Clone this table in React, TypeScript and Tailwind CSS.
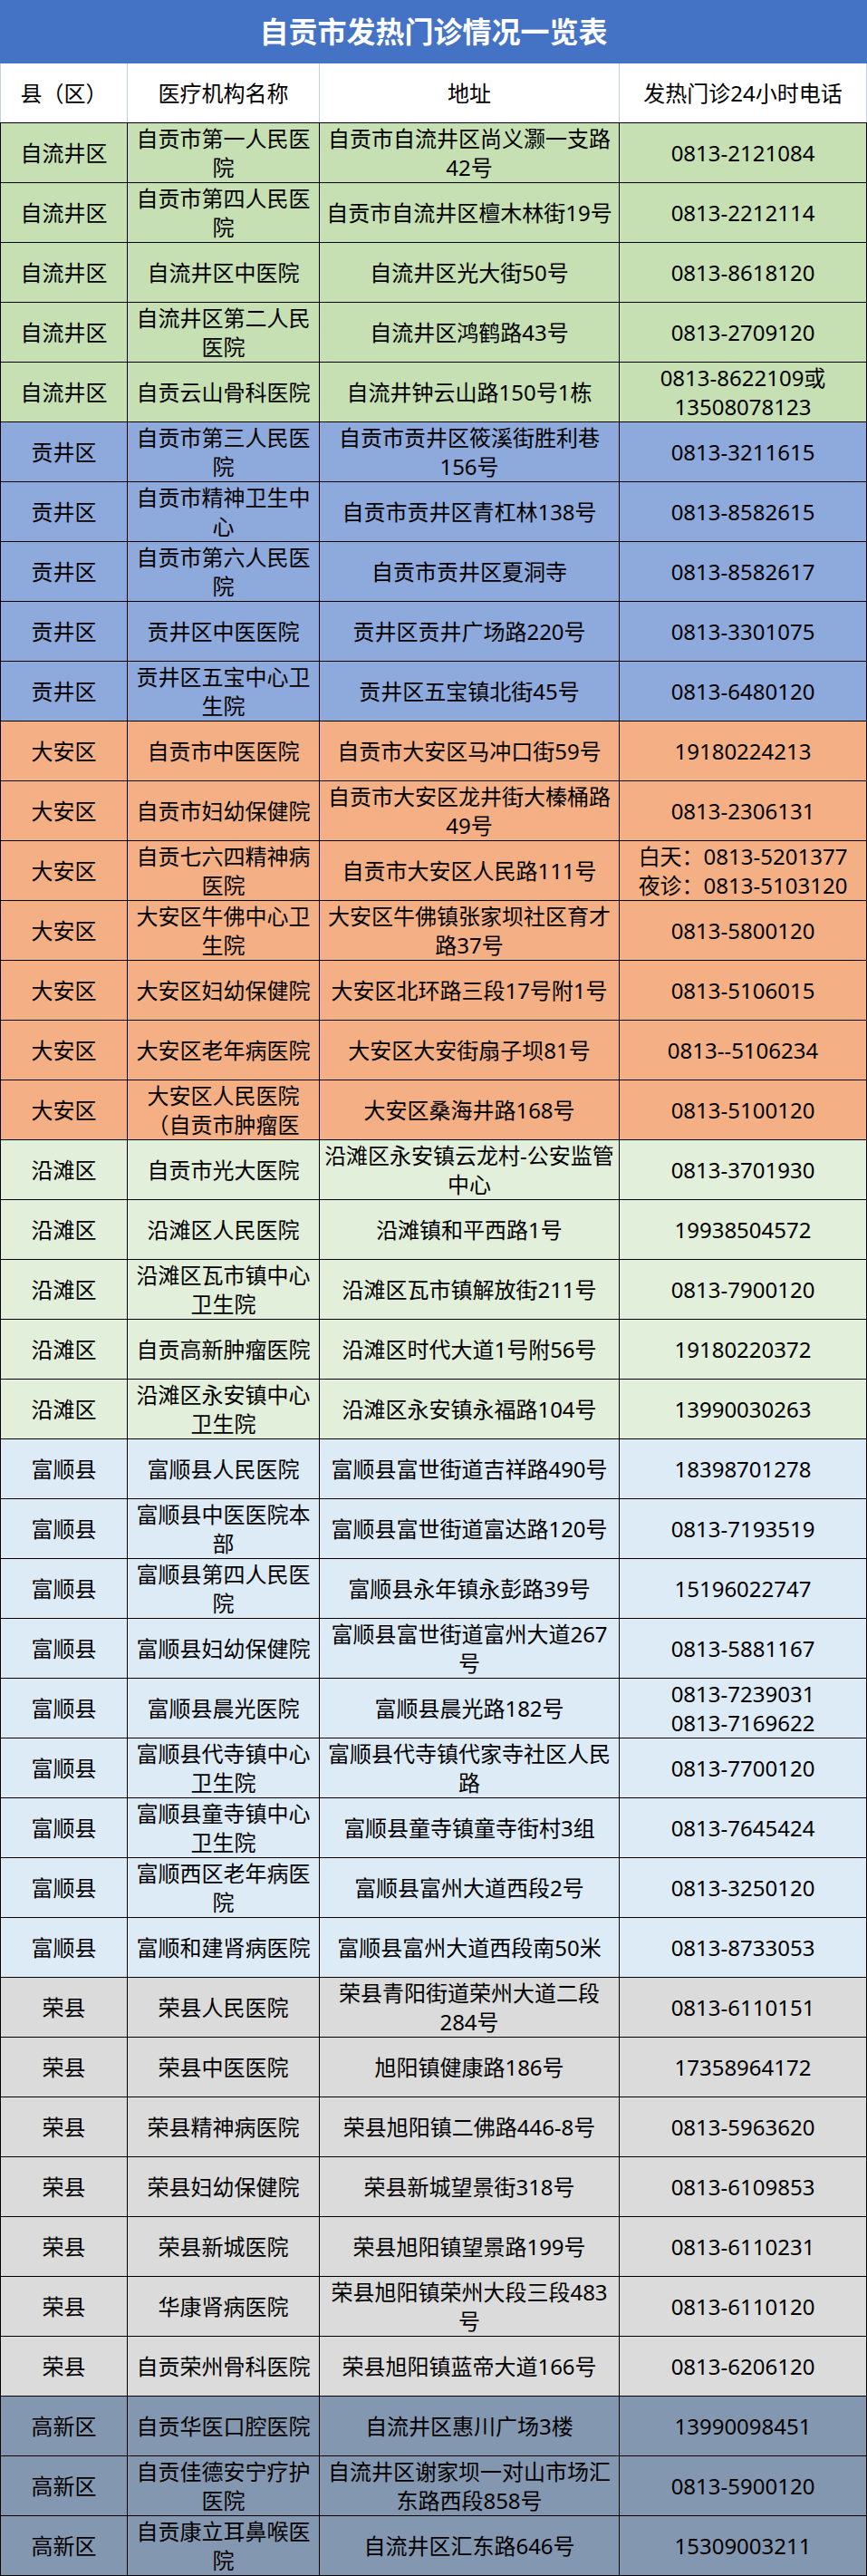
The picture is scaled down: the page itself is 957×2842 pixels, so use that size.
import React from "react";

type Group = "zlj" | "gj" | "da" | "yt" | "fs" | "rx" | "gx";

type Row = {
  g: Group;
  c: string;
  n: string[];
  a: string[];
  p: string[];
};

const bg: Record<Group, string> = {
  zlj: "bg-[#C6E0B4]",
  gj: "bg-[#8EA9DB]",
  da: "bg-[#F4B084]",
  yt: "bg-[#E2EFDA]",
  fs: "bg-[#DDEBF7]",
  rx: "bg-[#DBDBDB]",
  gx: "bg-[#8497B0]",
};

const rows: Row[] = [
  { g: "zlj", c: "自流井区", n: ["自贡市第一人民医", "院"], a: ["自贡市自流井区尚义灏一支路", "42号"], p: ["0813-2121084"] },
  { g: "zlj", c: "自流井区", n: ["自贡市第四人民医", "院"], a: ["自贡市自流井区檀木林街19号"], p: ["0813-2212114"] },
  { g: "zlj", c: "自流井区", n: ["自流井区中医院"], a: ["自流井区光大街50号"], p: ["0813-8618120"] },
  { g: "zlj", c: "自流井区", n: ["自流井区第二人民", "医院"], a: ["自流井区鸿鹤路43号"], p: ["0813-2709120"] },
  { g: "zlj", c: "自流井区", n: ["自贡云山骨科医院"], a: ["自流井钟云山路150号1栋"], p: ["0813-8622109或", "13508078123"] },

  { g: "gj", c: "贡井区", n: ["自贡市第三人民医", "院"], a: ["自贡市贡井区筱溪街胜利巷", "156号"], p: ["0813-3211615"] },
  { g: "gj", c: "贡井区", n: ["自贡市精神卫生中", "心"], a: ["自贡市贡井区青杠林138号"], p: ["0813-8582615"] },
  { g: "gj", c: "贡井区", n: ["自贡市第六人民医", "院"], a: ["自贡市贡井区夏洞寺"], p: ["0813-8582617"] },
  { g: "gj", c: "贡井区", n: ["贡井区中医医院"], a: ["贡井区贡井广场路220号"], p: ["0813-3301075"] },
  { g: "gj", c: "贡井区", n: ["贡井区五宝中心卫", "生院"], a: ["贡井区五宝镇北街45号"], p: ["0813-6480120"] },

  { g: "da", c: "大安区", n: ["自贡市中医医院"], a: ["自贡市大安区马冲口街59号"], p: ["19180224213"] },
  { g: "da", c: "大安区", n: ["自贡市妇幼保健院"], a: ["自贡市大安区龙井街大榛桶路", "49号"], p: ["0813-2306131"] },
  { g: "da", c: "大安区", n: ["自贡七六四精神病", "医院"], a: ["自贡市大安区人民路111号"], p: ["白天：0813-5201377", "夜诊：0813-5103120"] },
  { g: "da", c: "大安区", n: ["大安区牛佛中心卫", "生院"], a: ["大安区牛佛镇张家坝社区育才", "路37号"], p: ["0813-5800120"] },
  { g: "da", c: "大安区", n: ["大安区妇幼保健院"], a: ["大安区北环路三段17号附1号"], p: ["0813-5106015"] },
  { g: "da", c: "大安区", n: ["大安区老年病医院"], a: ["大安区大安街扇子坝81号"], p: ["0813--5106234"] },
  { g: "da", c: "大安区", n: ["大安区人民医院", "（自贡市肿瘤医"], a: ["大安区桑海井路168号"], p: ["0813-5100120"] },

  { g: "yt", c: "沿滩区", n: ["自贡市光大医院"], a: ["沿滩区永安镇云龙村-公安监管", "中心"], p: ["0813-3701930"] },
  { g: "yt", c: "沿滩区", n: ["沿滩区人民医院"], a: ["沿滩镇和平西路1号"], p: ["19938504572"] },
  { g: "yt", c: "沿滩区", n: ["沿滩区瓦市镇中心", "卫生院"], a: ["沿滩区瓦市镇解放街211号"], p: ["0813-7900120"] },
  { g: "yt", c: "沿滩区", n: ["自贡高新肿瘤医院"], a: ["沿滩区时代大道1号附56号"], p: ["19180220372"] },
  { g: "yt", c: "沿滩区", n: ["沿滩区永安镇中心", "卫生院"], a: ["沿滩区永安镇永福路104号"], p: ["13990030263"] },

  { g: "fs", c: "富顺县", n: ["富顺县人民医院"], a: ["富顺县富世街道吉祥路490号"], p: ["18398701278"] },
  { g: "fs", c: "富顺县", n: ["富顺县中医医院本", "部"], a: ["富顺县富世街道富达路120号"], p: ["0813-7193519"] },
  { g: "fs", c: "富顺县", n: ["富顺县第四人民医", "院"], a: ["富顺县永年镇永彭路39号"], p: ["15196022747"] },
  { g: "fs", c: "富顺县", n: ["富顺县妇幼保健院"], a: ["富顺县富世街道富州大道267", "号"], p: ["0813-5881167"] },
  { g: "fs", c: "富顺县", n: ["富顺县晨光医院"], a: ["富顺县晨光路182号"], p: ["0813-7239031", "0813-7169622"] },
  { g: "fs", c: "富顺县", n: ["富顺县代寺镇中心", "卫生院"], a: ["富顺县代寺镇代家寺社区人民", "路"], p: ["0813-7700120"] },
  { g: "fs", c: "富顺县", n: ["富顺县童寺镇中心", "卫生院"], a: ["富顺县童寺镇童寺街村3组"], p: ["0813-7645424"] },
  { g: "fs", c: "富顺县", n: ["富顺西区老年病医", "院"], a: ["富顺县富州大道西段2号"], p: ["0813-3250120"] },
  { g: "fs", c: "富顺县", n: ["富顺和建肾病医院"], a: ["富顺县富州大道西段南50米"], p: ["0813-8733053"] },

  { g: "rx", c: "荣县", n: ["荣县人民医院"], a: ["荣县青阳街道荣州大道二段", "284号"], p: ["0813-6110151"] },
  { g: "rx", c: "荣县", n: ["荣县中医医院"], a: ["旭阳镇健康路186号"], p: ["17358964172"] },
  { g: "rx", c: "荣县", n: ["荣县精神病医院"], a: ["荣县旭阳镇二佛路446-8号"], p: ["0813-5963620"] },
  { g: "rx", c: "荣县", n: ["荣县妇幼保健院"], a: ["荣县新城望景街318号"], p: ["0813-6109853"] },
  { g: "rx", c: "荣县", n: ["荣县新城医院"], a: ["荣县旭阳镇望景路199号"], p: ["0813-6110231"] },
  { g: "rx", c: "荣县", n: ["华康肾病医院"], a: ["荣县旭阳镇荣州大段三段483", "号"], p: ["0813-6110120"] },
  { g: "rx", c: "荣县", n: ["自贡荣州骨科医院"], a: ["荣县旭阳镇蓝帝大道166号"], p: ["0813-6206120"] },

  { g: "gx", c: "高新区", n: ["自贡华医口腔医院"], a: ["自流井区惠川广场3楼"], p: ["13990098451"] },
  { g: "gx", c: "高新区", n: ["自贡佳德安宁疗护", "医院"], a: ["自流井区谢家坝一对山市场汇", "东路西段858号"], p: ["0813-5900120"] },
  { g: "gx", c: "高新区", n: ["自贡康立耳鼻喉医", "院"], a: ["自流井区汇东路646号"], p: ["15309003211"] },
];

function Cell({ lines, first }: { lines: string[]; first?: boolean }) {
  return (
    <div
      className={
        (first ? "border-l " : "") +
        "border-r border-black overflow-hidden flex flex-col items-center justify-center text-center"
      }
    >
      {lines.map((l, i) => (
        <div key={i} className="whitespace-nowrap leading-[32px]">
          {l}
        </div>
      ))}
    </div>
  );
}

export default function App() {
  return (
    <div className="w-[957px] bg-white text-black text-[24px] font-['Noto_Sans','Noto_Sans_CJK_SC',sans-serif]">
      <div className="h-[70px] bg-[#4472C4] flex items-center justify-center text-white font-bold text-[32px]">
        自贡市发热门诊情况一览表
      </div>
      <div className="h-[65px] grid grid-cols-[141px_212px_331px_273px] bg-white">
        <div className="border-l border-r border-[#C3CEE0] flex items-center justify-center">县（区）</div>
        <div className="border-r border-[#C3CEE0] flex items-center justify-center">医疗机构名称</div>
        <div className="border-r border-[#C3CEE0] flex items-center justify-center">地址</div>
        <div className="border-r border-[#C3CEE0] flex items-center justify-center">发热门诊24小时电话</div>
      </div>
      <div className="border-b border-black">
        {rows.map((r, i) => (
          <div
            key={i}
            className={
              "h-[66px] grid grid-cols-[141px_212px_331px_273px] border-t border-black " +
              bg[r.g]
            }
          >
            <Cell lines={[r.c]} first />
            <Cell lines={r.n} />
            <Cell lines={r.a} />
            <Cell lines={r.p} />
          </div>
        ))}
      </div>
    </div>
  );
}
